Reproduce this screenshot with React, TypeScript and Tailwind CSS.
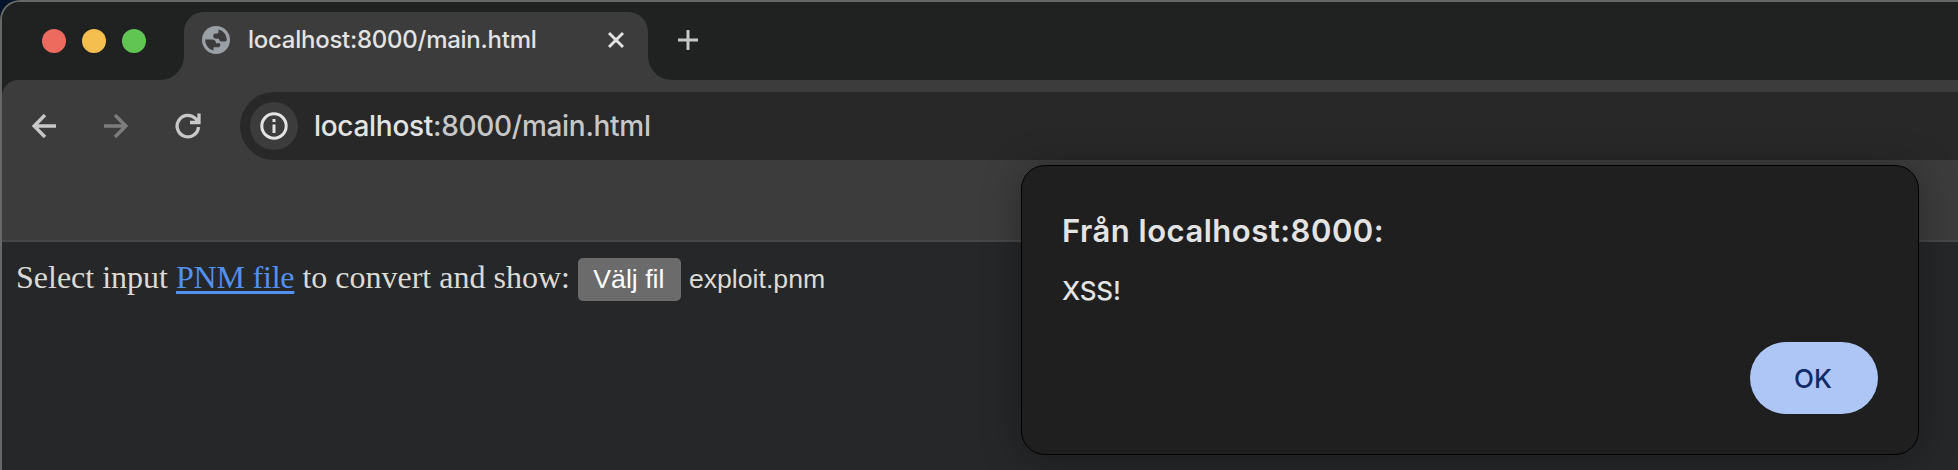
import React from "react";

function Globe() {
  return (
    <svg className="h-7 w-7 shrink-0" viewBox="0 0 28 28">
      <circle cx="14" cy="14" r="14" fill="#9aa0a6" />
      <path
        d="M3.200 13.500H10C12.500 13.500 14 15 14 17.200H18.200V19.500C18.200 20.700 17.300 21.300 16 21.300H11.500V24.400C6.500 23.300 3 19 3.200 13.500Z"
        fill="#3c3c3c"
      />
      <path
        d="M16.500 3.400C21.500 4.500 24.800 8.800 24.800 14C24.500 15.300 23.500 15.500 22 15.500H19.500C17.800 15.500 17.200 14.500 17 12.800H14.200C12.200 12.800 11.200 11.500 11.200 9.800C11.200 8.400 12.200 7.500 13.800 7.500H15.500C16.300 7.500 16.500 6.500 16.500 5.800Z"
        fill="#3c3c3c"
      />
    </svg>
  );
}

function TabStrip() {
  return (
    <div className="flex h-[78px] bg-[#202221] pt-[10px]">
      <div className="flex w-[182px] items-start gap-4 pl-10 pt-[17px]">
        <span className="h-6 w-6 rounded-full bg-[#ec6a5e]" />
        <span className="h-6 w-6 rounded-full bg-[#f4bf4f]" />
        <span className="h-6 w-6 rounded-full bg-[#61c554]" />
      </div>
      <div className="relative flex h-[68px] w-[464px] rounded-t-[20px] bg-[#3c3c3c]">
        <svg className="absolute -left-6 bottom-0 h-6 w-6" viewBox="0 0 24 24">
          <path d="M24 0A24 24 0 0 1 0 24H24Z" fill="#3c3c3c" />
        </svg>
        <svg className="absolute -right-6 bottom-0 h-6 w-6" viewBox="0 0 24 24">
          <path d="M0 0A24 24 0 0 0 24 24H0Z" fill="#3c3c3c" />
        </svg>
        <div className="flex h-14 w-full items-center pl-[18px]">
          <Globe />
          <span className="ml-[18px] w-[340px] whitespace-nowrap text-[24px] font-medium leading-[30px] tracking-[-0.26px] text-[#e3e3e3]">
            localhost:8000/main.html
          </span>
          <svg className="ml-[20px] h-4 w-4" viewBox="0 0 16 16" fill="none" stroke="#e3e3e3" strokeWidth="2.900">
            <path d="M1 1L15 15M15 1L1 15" />
          </svg>
        </div>
      </div>
      <svg className="ml-[30px] mt-[18px] h-5 w-5" viewBox="0 0 20 20" fill="none" stroke="#c7c7c7" strokeWidth="3">
        <path d="M10 0V20M0 10H20" />
      </svg>
    </div>
  );
}

function Toolbar() {
  return (
    <div className="bg-[#202221]">
      <div className="h-[162px] rounded-tl-[16px] border-b-2 border-[#474747] bg-[#3c3c3c] pt-3">
        <div className="flex h-[68px] items-center">
          <div className="flex w-[238px] items-center pl-[30px]">
            <svg className="h-6 w-6" viewBox="0 0 24 24" fill="none" stroke="#c7c7c7" strokeWidth="3.400">
              <path d="M24 12H2M13 1L2.200 12L13 23" />
            </svg>
            <svg className="ml-[48px] h-6 w-6" viewBox="0 0 24 24" fill="none" stroke="#7c7c7c" strokeWidth="3.400">
              <path d="M0 12H22M11 1L21.800 12L11 23" />
            </svg>
            <svg className="ml-[47px] h-[26px] w-[26px]" viewBox="0 0 26 26" fill="none" stroke="#c7c7c7" strokeWidth="3.300">
              <path d="M23.500 14A10.700 10.700 0 1 1 20.600 5.700L24 9.500M24 0.500V9.500H15" />
            </svg>
          </div>
          <div className="flex h-[68px] grow items-center rounded-l-full bg-[#282828] pl-[10px]">
            <div className="flex h-12 w-12 items-center justify-center rounded-full bg-[#3c3c3c]">
              <svg className="h-7 w-7" viewBox="0 0 28 28" fill="none" stroke="#e3e3e3" strokeWidth="3">
                <circle cx="14" cy="14" r="12.200" />
                <path d="M14 12.500V21M14 7V10" />
              </svg>
            </div>
            <span className="ml-4 whitespace-nowrap text-[28px] font-medium leading-9 tracking-[-0.3px] text-[#c7c7c7]">
              <span className="text-[#e3e3e3]">localhost</span>:8000/main.html
            </span>
          </div>
        </div>
      </div>
    </div>
  );
}

function Page() {
  return (
    <div className="flex grow items-start bg-[#262729] pl-[14px] pt-4 text-[#dcdad5]">
      <p className="mt-px whitespace-nowrap font-['Liberation_Serif',serif] text-[32px] leading-[36px]">
        Select input{" "}
        <a className="text-[#5390f0] underline decoration-[3px] underline-offset-[3px] tracking-[-0.2px]">
          PNM file
        </a>{" "}
        to convert and show:
      </p>
      <button className="ml-2 h-[43px] w-[103px] rounded-[5px] bg-[#6b6b6b] pr-px font-['Liberation_Sans',sans-serif] text-[26.670px] leading-[43px] text-white">
        Välj fil
      </button>
      <span className="ml-2 font-['Liberation_Sans',sans-serif] text-[26.670px] leading-[43px]">exploit.pnm</span>
    </div>
  );
}

function AlertDialog() {
  return (
    <div
      role="dialog"
      className="absolute left-[1021px] top-[165px] flex h-[290px] w-[898px] flex-col rounded-[24px] border border-black bg-[#1f1f1f] pl-10 pr-10 pt-[45px] text-[#e3e3e3] shadow-[0_4px_40px_rgba(0,0,0,0.3)]"
    >
      <h1 className="text-[31px] font-semibold leading-10 tracking-[0.5px]">Från localhost:8000:</h1>
      <p className="mt-5 text-[26px] font-medium leading-10 tracking-[-0.2px]">XSS!</p>
      <button className="mt-[31px] h-[72px] w-32 self-end rounded-full bg-[#aec6f6] pr-0.5 text-[26px] font-medium text-[#0f2a66]">
        OK
      </button>
    </div>
  );
}

export default function App() {
  return (
    <div className="relative h-[470px] w-[1958px] overflow-hidden bg-[#05142a] font-['Inter',sans-serif]">
      <div className="flex h-[470px] flex-col overflow-hidden rounded-tl-[20px] border-l-2 border-t-2 border-[#666867] bg-[#202221]">
        <TabStrip />
        <Toolbar />
        <Page />
      </div>
      <AlertDialog />
    </div>
  );
}
